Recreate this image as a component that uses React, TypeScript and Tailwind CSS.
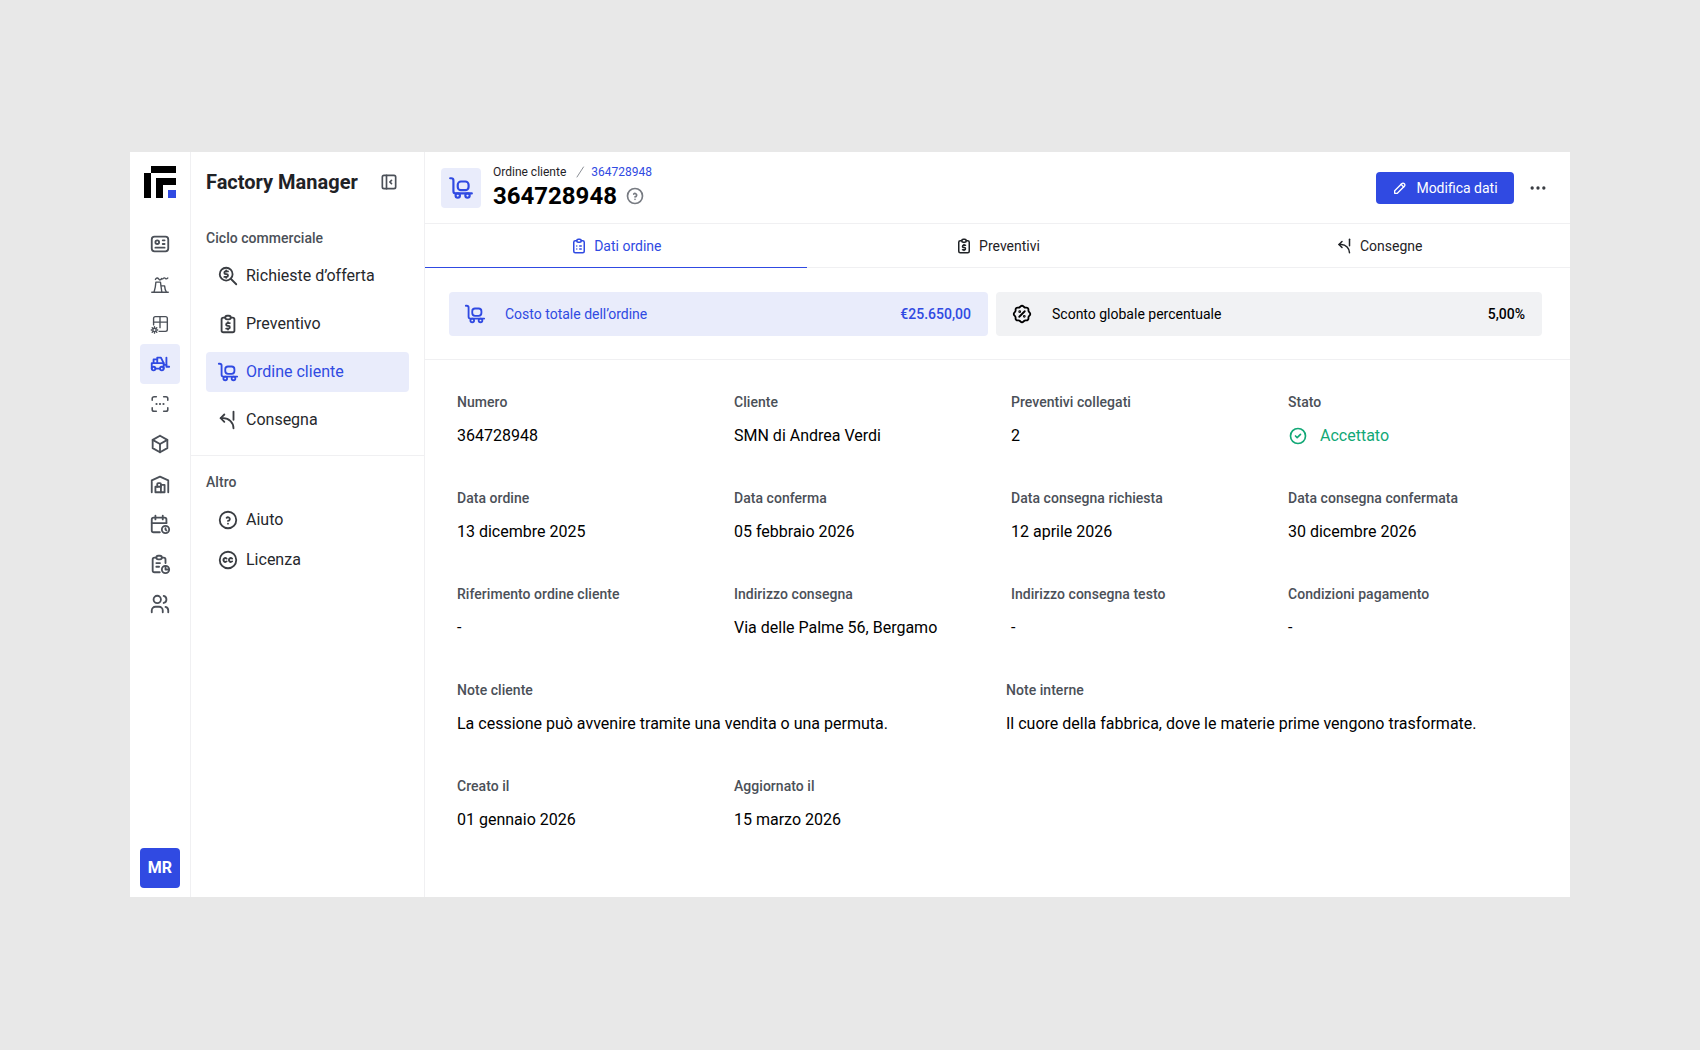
import React from "react";
import {
  TbBox,
  TbBuildingWarehouse,
  TbCalendarTime,
  TbCircleCheck,
  TbClipboardList,
  TbCreativeCommons,
  TbDots,
  TbForklift,
  TbHelpCircle,
  TbId,
  TbLayoutSidebarLeftCollapse,
  TbPencil,
  TbReport,
  TbReportMoney,
  TbRosetteDiscount,
  TbTruckLoading,
  TbUsers,
  TbZoomMoney,
  TbArrowRampLeft2,
} from "react-icons/tb";

const TowersIcon = ({ className }: { className?: string }) => (
  <svg viewBox="0 0 24 24" fill="none" stroke="currentColor" strokeWidth={1.5} strokeLinecap="round" strokeLinejoin="round" className={className}>
    <path d="M3 21h18" />
    <path d="M5.500 21c1-3.500 1.800-7 2-11h5l1.500 11" />
    <path d="M13.500 14h3.500c.2 2.500.8 5 2 7" />
    <path d="M7 7c1.200-2 2.500-2 3.500-.5s2 1.500 3.500-.5" />
    <path d="M15 6.500c1-1.500 2-1.500 3-.5s1.500.5 2.500-.5" />
  </svg>
);

const TableGearIcon = ({ className }: { className?: string }) => (
  <svg viewBox="0 0 24 24" fill="none" stroke="currentColor" strokeWidth={1.5} strokeLinecap="round" strokeLinejoin="round" className={className}>
    <path d="M5 13v-7a2 2 0 0 1 2-2h11a2 2 0 0 1 2 2v12a2 2 0 0 1-2 2h-7" />
    <path d="M5 10h15" />
    <path d="M12 4v12" />
    <circle cx="6" cy="18.500" r="1.800" />
    <path d="M6 15v.8M6 21.200v.8M2.500 18.500h.8M8.700 18.500h.8M3.500 16l.6.6M7.900 20.400l.6.6M8.500 16l-.6.6M4.100 20.400l-.6.6" />
  </svg>
);

const ScanDotsIcon = ({ className }: { className?: string }) => (
  <svg viewBox="0 0 24 24" fill="none" stroke="currentColor" strokeWidth={1.7} strokeLinecap="round" strokeLinejoin="round" className={className}>
    <path d="M3.500 8v-2a2 2 0 0 1 2-2h2.500" />
    <path d="M16 4h2.500a2 2 0 0 1 2 2v2" />
    <path d="M20.500 16v2a2 2 0 0 1-2 2h-2.500" />
    <path d="M8 20h-2.500a2 2 0 0 1-2-2v-2" />
    <path d="M8.200 12h.01M12 12h.01M15.800 12h.01" strokeWidth={2.4} />
  </svg>
);

const Logo = () => (
  <svg viewBox="0 0 32 32" className="w-8 h-8">
    <path d="M7 0h25v7H7z M0 7h7v25H0z M12 12h20v7H19v13h-7z" fill="#000" />
    <path d="M24 24h8v8h-8z" fill="#304ae2" />
  </svg>
);

const railIcons = [
  { icon: TbId },
  { icon: TowersIcon },
  { icon: TableGearIcon },
  { icon: TbForklift, active: true },
  { icon: ScanDotsIcon },
  { icon: TbBox },
  { icon: TbBuildingWarehouse },
  { icon: TbCalendarTime },
  { icon: TbReport },
  { icon: TbUsers },
];

const commercial = [
  { label: "Richieste d’offerta", icon: TbZoomMoney },
  { label: "Preventivo", icon: TbReportMoney },
  { label: "Ordine cliente", icon: TbTruckLoading, active: true },
  { label: "Consegna", icon: TbArrowRampLeft2 },
];

const other = [
  { label: "Aiuto", icon: TbHelpCircle },
  { label: "Licenza", icon: TbCreativeCommons },
];

const tabs = [
  { label: "Dati ordine", icon: TbClipboardList, active: true },
  { label: "Preventivi", icon: TbReportMoney },
  { label: "Consegne", icon: TbArrowRampLeft2 },
];

const rows = [
  [
    { label: "Numero", value: "364728948" },
    { label: "Cliente", value: "SMN di Andrea Verdi" },
    { label: "Preventivi collegati", value: "2" },
  ],
  [
    { label: "Data ordine", value: "13 dicembre 2025" },
    { label: "Data conferma", value: "05 febbraio 2026" },
    { label: "Data consegna richiesta", value: "12 aprile 2026" },
    { label: "Data consegna confermata", value: "30 dicembre 2026" },
  ],
  [
    { label: "Riferimento ordine cliente", value: "-" },
    { label: "Indirizzo consegna", value: "Via delle Palme 56, Bergamo" },
    { label: "Indirizzo consegna testo", value: "-" },
    { label: "Condizioni pagamento", value: "-" },
  ],
];

const Field = ({ label, children }: { label: string; children: React.ReactNode }) => (
  <div className="flex flex-col gap-[14px]">
    <div className="text-sm leading-5 font-medium tracking-[0.04px] text-[#4b5058]">{label}</div>
    <div className="text-base leading-5 text-black">{children}</div>
  </div>
);

const NavItem = ({ label, icon: Icon, active }: { label: string; icon: React.ElementType; active?: boolean }) => (
  <div className={`flex items-center gap-[7px] h-10 pl-[11px] rounded-[4px] text-base ${active ? "bg-[#e9ecfb] text-[#304ae2]" : "text-[#26282c]"}`}>
    <Icon className={`w-[22px] h-[22px] ${active ? "" : "text-[#3a3d42]"}`} />
    <span>{label}</span>
  </div>
);

export default function App() {
  return (
    <div className="flex justify-center h-screen pt-[152px] bg-[#e8e8e8] font-['Roboto',sans-serif]">
      <div className="flex w-[1440px] h-[745px] bg-white">
        {/* icon rail */}
        <div className="flex flex-col items-center w-[61px] shrink-0 border-r border-[#f0f0f2] pt-[14px] pb-[9px]">
          <Logo />
          <div className="flex flex-col mt-[26px]">
            {railIcons.map(({ icon: Icon, active }, i) => (
              <div
                key={i}
                className={`flex items-center justify-center w-10 h-10 rounded-[4px] ${active ? "bg-[#e9ecfb] text-[#304ae2]" : "text-[#4b5058]"}`}
              >
                <Icon className="w-[22px] h-[22px]" />
              </div>
            ))}
          </div>
          <div className="flex items-center justify-center w-10 h-10 mt-auto rounded-[4px] bg-[#304ae2] text-white font-bold text-base">
            MR
          </div>
        </div>

        {/* section sidebar */}
        <div className="flex flex-col w-[234px] shrink-0 border-r border-[#f0f0f2]">
          <div className="flex items-center justify-between h-[60px] mb-[2px] pl-[15px] pr-[25px]">
            <span className="text-xl font-bold text-[#1f2226]">Factory Manager</span>
            <TbLayoutSidebarLeftCollapse className="w-5 h-5 text-[#4b5058]" />
          </div>
          <div className="flex flex-col gap-2 px-[15px] pt-[14px] border-b border-[#f0f0f2] h-[242px]">
            <div className="text-sm leading-5 font-medium tracking-[0.04px] text-[#4b5058]">Ciclo commerciale</div>
            {commercial.map((item) => (
              <NavItem key={item.label} {...item} />
            ))}
          </div>
          <div className="flex flex-col px-[15px] pt-4">
            <div className="text-sm leading-5 font-medium tracking-[0.04px] text-[#4b5058] mb-[8px]">Altro</div>
            {other.map((item) => (
              <NavItem key={item.label} {...item} />
            ))}
          </div>
        </div>

        {/* main */}
        <div className="flex flex-col flex-1 min-w-0">
          <div className="flex items-center justify-between h-[72px] pl-[16px] pr-[22px] border-b border-[#f0f0f2]">
            <div className="flex items-center gap-3">
              <div className="flex items-center justify-center w-10 h-10 rounded-[4px] bg-[#e9ecfb] text-[#304ae2]">
                <TbTruckLoading className="w-[26px] h-[26px]" />
              </div>
              <div className="flex flex-col">
                <div className="flex items-center text-xs leading-4 text-[#1f2226]">
                  <span>Ordine cliente</span>
                  <svg viewBox="0 0 16 16" fill="none" stroke="#8b8f96" strokeWidth={1} strokeLinecap="round" className="w-4 h-4 ml-[6px] mr-[3px]">
                    <path d="M11.500 3l-6.500 10" />
                  </svg>
                  <span className="text-[#304ae2]">364728948</span>
                </div>
                <div className="flex items-center gap-2">
                  <span className="text-2xl leading-8 font-bold text-black">364728948</span>
                  <TbHelpCircle className="w-5 h-5 text-[#777b82]" />
                </div>
              </div>
            </div>
            <div className="flex items-center gap-[14px]">
              <button className="flex items-center justify-center gap-2 w-[138px] h-8 rounded-[4px] bg-[#304ae2] text-white text-sm">
                <TbPencil className="w-4 h-4" />
                Modifica dati
              </button>
              <TbDots className="w-5 h-5 text-[#3a3d42]" />
            </div>
          </div>

          <div className="flex h-[44px] border-b border-[#f0f0f2]">
            {tabs.map(({ label, icon: Icon, active }) => (
              <div
                key={label}
                className={`flex flex-1 items-center justify-center gap-[6px] text-sm h-[44px] ${active ? "text-[#304ae2] border-b border-[#304ae2]" : "text-[#1f2226]"}`}
              >
                <Icon className="w-[18px] h-[18px]" />
                {label}
              </div>
            ))}
          </div>

          <div className="flex gap-2 pl-[24px] pt-6 pb-[23px] border-b border-[#f0f0f2]">
            <div className="flex items-center w-[539px] h-11 pl-[15px] pr-[17px] rounded-[4px] bg-[#e9ecfb] text-[#304ae2] text-sm">
              <TbTruckLoading className="w-[22px] h-[22px] mr-[19px]" />
              <span>Costo totale dell’ordine</span>
              <span className="ml-auto font-medium">€25.650,00</span>
            </div>
            <div className="flex items-center w-[546px] h-11 pl-[15px] pr-[17px] rounded-[4px] bg-[#f1f2f4] text-black text-sm">
              <TbRosetteDiscount className="w-[22px] h-[22px] mr-[19px]" />
              <span>Sconto globale percentuale</span>
              <span className="ml-auto font-medium">5,00%</span>
            </div>
          </div>

          <div className="flex flex-col gap-[42px] pl-[32px] pt-[32px]">
            {rows.map((row, i) => (
              <div key={i} className="grid grid-cols-[repeat(4,277px)]">
                {row.map((f) => (
                  <Field key={f.label} label={f.label}>
                    {f.value}
                  </Field>
                ))}
                {i === 0 && (
                  <Field label="Stato">
                    <span className="flex items-center gap-[12px] text-[#12a876]">
                      <TbCircleCheck className="w-5 h-5" />
                      Accettato
                    </span>
                  </Field>
                )}
              </div>
            ))}
            <div className="grid grid-cols-[549px_1fr]">
              <Field label="Note cliente">La cessione può avvenire tramite una vendita o una permuta.</Field>
              <Field label="Note interne">Il cuore della fabbrica, dove le materie prime vengono trasformate.</Field>
            </div>
            <div className="grid grid-cols-[repeat(4,277px)]">
              <Field label="Creato il">01 gennaio 2026</Field>
              <Field label="Aggiornato il">15 marzo 2026</Field>
            </div>
          </div>
        </div>
      </div>
    </div>
  );
}
